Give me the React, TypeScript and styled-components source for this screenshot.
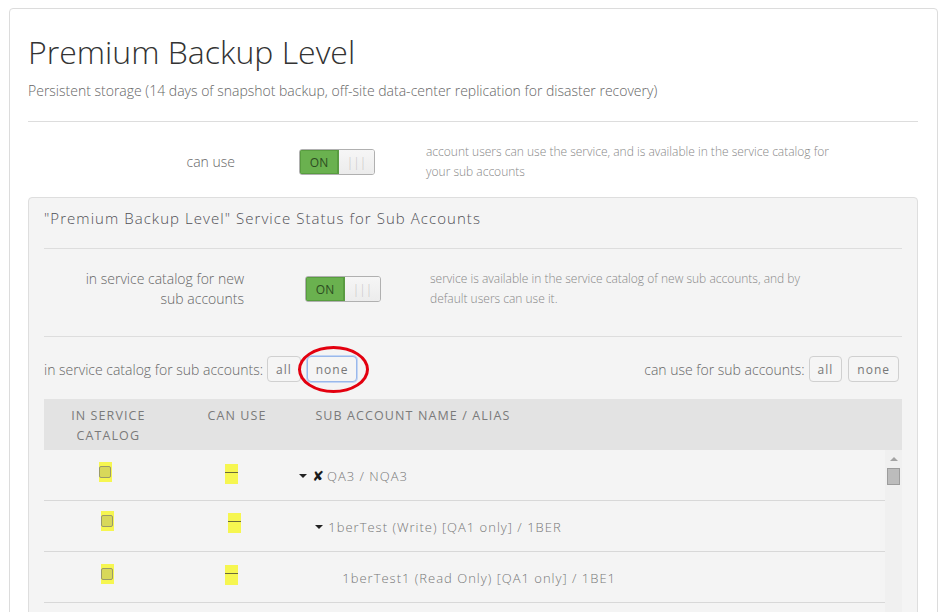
import React from "react";
import styled, { createGlobalStyle } from "styled-components";

const Global = createGlobalStyle`
  html, body { margin: 0; padding: 0; background: #fff; }
  body { font-family: "Open Sans", "Liberation Sans", sans-serif; font-weight: 300; color: #666; }
  * { box-sizing: border-box; }
`;

const Page = styled.div`
  padding: 8px 8px 0 9px;
  height: 612px;
  overflow: hidden;
`;

const Card = styled.div`
  border: 1px solid #dcdcdc;
  border-radius: 4px;
  padding: 22px 19px 0 18px;
  height: 700px;
  width: 929px;
`;

const Title = styled.h1`
  margin: 0;
  font-weight: 300;
  font-size: 32px;
  line-height: 42px;
  color: #333;
`;

const Subtitle = styled.p`
  margin: 8px 0 0;
  font-size: 14px;
  line-height: 20px;
  color: #666;
`;

const Divider = styled.hr<{ $top: number; $bottom: number }>`
  border: 0;
  border-top: 1px solid #ddd;
  margin: ${(p) => `${p.$top}px 0 ${p.$bottom}px`};
`;

const SettingRow = styled.div<{ $labelW: number; $gap: number }>`
  display: grid;
  grid-template-columns: ${(p) => p.$labelW}px 76px 1fr;
  column-gap: ${(p) => p.$gap}px;
  align-items: center;
`;

const SettingLabel = styled.div`
  text-align: right;
  font-size: 14px;
  line-height: 20px;
  color: #666;
`;

const SettingDesc = styled.div<{ $shift: number }>`
  font-size: 12px;
  line-height: 20px;
  color: #888;
  margin-left: ${(p) => p.$shift}px;
  max-width: 410px;
`;

const Toggle = styled.div`
  display: flex;
  width: 76px;
  height: 26px;
  border: 1px solid #b0b0b0;
  border-radius: 3px;
  overflow: hidden;
  font-size: 12px;
`;

const ToggleOn = styled.span`
  width: 39px;
  background: #6ab14f;
  border-right: 1px solid #5a9a42;
  color: #2d4d22;
  font-weight: 400;
  display: flex;
  align-items: center;
  justify-content: center;
  box-shadow: inset 0 0 0 1px #589d3f;
`;

const ToggleOff = styled.span`
  flex: 1;
  background: linear-gradient(#f6f6f6, #ececec);
  color: #c4c4c4;
  display: flex;
  align-items: center;
  justify-content: center;
  font-size: 12px;
`;

const Panel = styled.div`
  margin-top: 15px;
  background: #f4f4f4;
  border: 1px solid #dedede;
  border-radius: 4px;
  padding: 10px 15px 0;
  height: 480px;
`;

const PanelTitle = styled.h2`
  margin: 0;
  font-weight: 300;
  font-size: 15px;
  line-height: 21px;
  letter-spacing: 1.05px;
  color: #4f4f55;
`;

const BulkBar = styled.div`
  display: flex;
  align-items: center;
  justify-content: space-between;
  height: 26px;
  padding-right: 3px;
`;

const BulkGroup = styled.div`
  display: flex;
  align-items: center;
  gap: 6px;
  font-size: 14px;
  color: #666;
`;

const BulkLabel = styled.span`
  margin-right: -2px;
`;

const SmallButton = styled.button<{ $focus?: boolean }>`
  font-family: inherit;
  font-weight: 400;
  font-size: 12px;
  letter-spacing: 1px;
  color: #777;
  background: #f5f5f5;
  border: 1px solid ${(p) => (p.$focus ? "#9ab8ea" : "#d0d0d0")};
  box-shadow: ${(p) => (p.$focus ? "0 0 0 1px #c3d6f5" : "none")};
  border-radius: 4px;
  height: 26px;
  padding: 0 8px;
  cursor: pointer;
`;

const Circled = styled.span`
  position: relative;
  display: inline-flex;
`;

const RedRing = styled.span`
  position: absolute;
  left: -9px;
  top: -10px;
  width: 71px;
  height: 47px;
  border: 3px solid #e3000f;
  border-radius: 50%;
  pointer-events: none;
`;

const Table = styled.div`
  margin-top: 17px;
`;

const HeadRow = styled.div`
  display: grid;
  grid-template-columns: 15% 15% 1fr;
  background: #e3e3e3;
  height: 51px;
  padding-top: 7px;
  font-size: 12.5px;
  font-weight: 400;
  letter-spacing: 1.1px;
  color: #7a7a7a;
  line-height: 20px;
`;

const HeadCell = styled.div<{ $center?: boolean }>`
  text-align: ${(p) => (p.$center ? "center" : "left")};
  padding-left: ${(p) => (p.$center ? 0 : 14)}px;
`;

const BodyWrap = styled.div`
  display: flex;
  height: 170px;
`;

const Rows = styled.div`
  flex: 1;
`;

const Row = styled.div`
  display: grid;
  grid-template-columns: 15% 15% 1fr;
  height: 51px;
  border-bottom: 1px solid #d8d8d8;
  align-items: start;
`;

const Cell = styled.div<{ $dx: number; $dy: number }>`
  display: flex;
  justify-content: center;
  padding-top: ${(p) => p.$dy}px;
  transform: translateX(${(p) => p.$dx}px);
`;

const Highlight = styled.span`
  display: inline-flex;
  align-items: center;
  justify-content: center;
  width: 13px;
  height: 20px;
  background: #f6f650;
`;

const Check = styled.span`
  width: 12px;
  height: 12px;
  border: 1px solid #9a9a6a;
  border-radius: 2px;
  background: #d8d85a;
`;

const Dash = styled.span`
  width: 13px;
  height: 1px;
  background: #6b6b3a;
  margin-top: -3px;
`;

const NameCell = styled.div<{ $indent: number }>`
  display: flex;
  align-items: center;
  gap: 5px;
  padding-top: 17px;
  padding-left: ${(p) => p.$indent}px;
  font-size: 13px;
  letter-spacing: 1px;
  color: #777;
  line-height: 18px;
`;

const Caret = styled.span`
  width: 0;
  height: 0;
  border-left: 4px solid transparent;
  border-right: 4px solid transparent;
  border-top: 4px solid #222;
`;

const Cross = styled.span`
  color: #1a1a1a;
  font-family: "DejaVu Sans", sans-serif;
  font-weight: 400;
  font-size: 14px;
  margin-right: -2px;
  letter-spacing: 0;
`;

const Scrollbar = styled.div`
  width: 17px;
  background: #f0f0f0;
  display: flex;
  flex-direction: column;
  align-items: center;
  padding-top: 7px;
`;

const ScrollArrow = styled.span`
  width: 0;
  height: 0;
  border-left: 4px solid transparent;
  border-right: 4px solid transparent;
  border-bottom: 4px solid #a3a3a3;
`;

const Thumb = styled.span`
  margin-top: 7px;
  width: 13px;
  height: 17px;
  background: #bcbcbc;
  border: 1px solid #9c9c9c;
`;

const rows = [
  { indent: 3, caret: true, cross: true, name: "QA3 / NQA3", cx: -2, cy: 12, dx: -2, dy: 14 },
  { indent: 19, caret: true, cross: false, name: "1berTest (Write) [QA1 only] / 1BER", cx: 0, cy: 10, dx: 1, dy: 12 },
  { indent: 46, caret: false, cross: false, name: "1berTest1 (Read Only) [QA1 only] / 1BE1", cx: 0, cy: 12, dx: -2, dy: 13 },
];

export default function App() {
  return (
    <>
      <Global />
      <Page>
        <Card>
          <Title>Premium Backup Level</Title>
          <Subtitle>
            Persistent storage (14 days of snapshot backup, off-site data-center replication for disaster recovery)
          </Subtitle>
          <Divider $top={20} $bottom={20} />
          <SettingRow $labelW={207} $gap={64}>
            <SettingLabel>can use</SettingLabel>
            <Toggle>
              <ToggleOn>ON</ToggleOn>
              <ToggleOff>|||</ToggleOff>
            </Toggle>
            <SettingDesc $shift={-13}>
              account users can use the service, and is available in the service catalog for your sub accounts
            </SettingDesc>
          </SettingRow>
          <Panel>
            <PanelTitle>"Premium Backup Level" Service Status for Sub Accounts</PanelTitle>
            <Divider $top={19} $bottom={20} />
            <SettingRow $labelW={200} $gap={61}>
              <SettingLabel>
                in service catalog for new
                <br />
                sub accounts
              </SettingLabel>
              <Toggle>
                <ToggleOn>ON</ToggleOn>
                <ToggleOff>|||</ToggleOff>
              </Toggle>
              <SettingDesc $shift={-12}>
                service is available in the service catalog of new sub accounts, and by default users can use it.
              </SettingDesc>
            </SettingRow>
            <Divider $top={27} $bottom={19} />
            <BulkBar>
              <BulkGroup>
                <BulkLabel>in service catalog for sub accounts:</BulkLabel>
                <SmallButton>all</SmallButton>
                <Circled>
                  <SmallButton $focus>none</SmallButton>
                  <RedRing />
                </Circled>
              </BulkGroup>
              <BulkGroup>
                <BulkLabel>can use for sub accounts:</BulkLabel>
                <SmallButton>all</SmallButton>
                <SmallButton>none</SmallButton>
              </BulkGroup>
            </BulkBar>
            <Table>
              <HeadRow>
                <HeadCell $center>
                  IN SERVICE
                  <br />
                  CATALOG
                </HeadCell>
                <HeadCell $center>CAN USE</HeadCell>
                <HeadCell>SUB ACCOUNT NAME / ALIAS</HeadCell>
              </HeadRow>
              <BodyWrap>
                <Rows>
                  {rows.map((r) => (
                    <Row key={r.name}>
                      <Cell $dx={r.cx} $dy={r.cy}>
                        <Highlight>
                          <Check />
                        </Highlight>
                      </Cell>
                      <Cell $dx={r.dx} $dy={r.dy}>
                        <Highlight>
                          <Dash />
                        </Highlight>
                      </Cell>
                      <NameCell $indent={r.indent}>
                        {r.caret && <Caret />}
                        {r.cross && <Cross>✘</Cross>}
                        <span>{r.name}</span>
                      </NameCell>
                    </Row>
                  ))}
                </Rows>
                <Scrollbar>
                  <ScrollArrow />
                  <Thumb />
                </Scrollbar>
              </BodyWrap>
            </Table>
          </Panel>
        </Card>
      </Page>
    </>
  );
}
